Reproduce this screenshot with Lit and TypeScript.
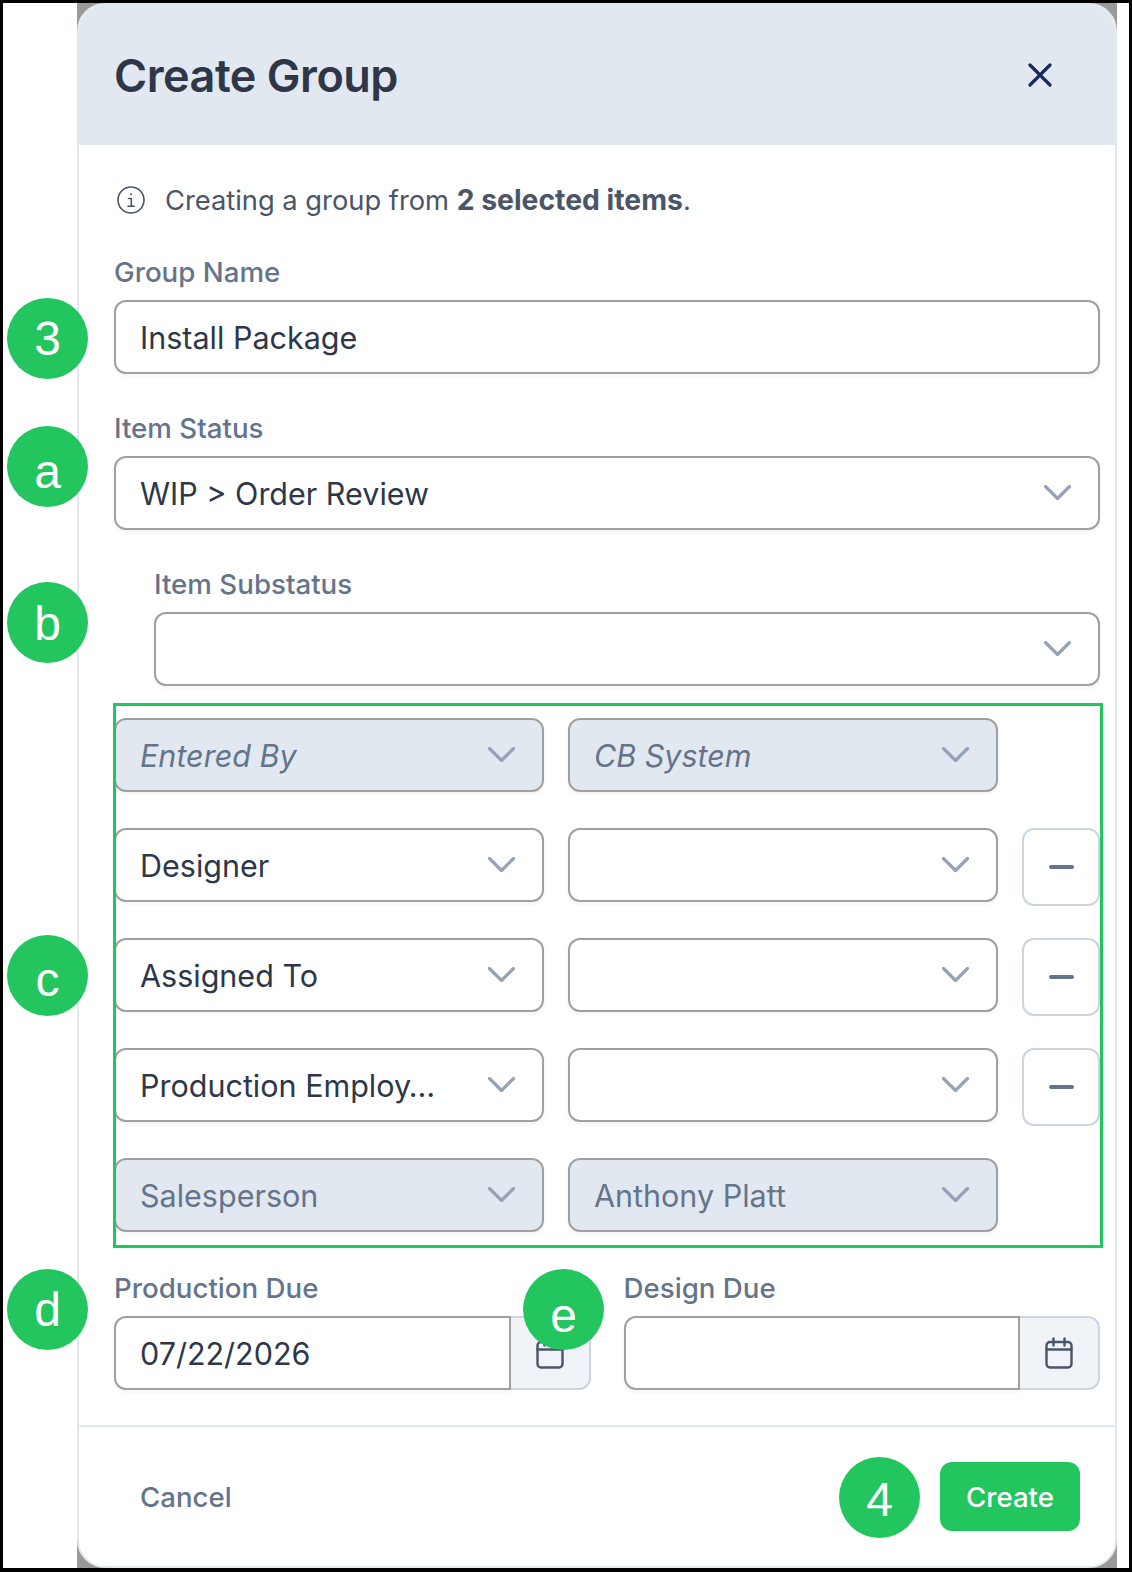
import { LitElement, html, css } from "lit";
import { customElement } from "lit/decorators.js";

const chevron = html`<svg class="chev" viewBox="0 0 27 15" fill="none"><path d="M1.5 1.5 13.5 13.5 25.5 1.5" stroke="currentColor" stroke-width="3.2" stroke-linecap="round" stroke-linejoin="round"/></svg>`;
const calendar = html`<svg class="cal" viewBox="0 0 28 32" fill="none" stroke="currentColor" stroke-width="2.4" stroke-linecap="round" stroke-linejoin="round"><rect x="1.5" y="5" width="25" height="25.5" rx="3.5"/><path d="M8.5 1.5v7M19.5 1.5v7M1.5 12.5h25"/></svg>`;
const callouts = [
  { t: "3", x: 47.5, y: 338, dy: 0 },
  { t: "a", x: 47.5, y: 466.5, dy: 5 },
  { t: "b", x: 47.5, y: 622, dy: 1 },
  { t: "c", x: 47.5, y: 975.5, dy: 4 },
  { t: "d", x: 47.5, y: 1309.5, dy: 0 },
  { t: "e", x: 563.5, y: 1309.5, dy: 6 },
  { t: "4", x: 879.5, y: 1497, dy: 2 },
];
const rows = [
  { a: "Entered By", b: "CB System", state: "ghost", rm: false },
  { a: "Designer", b: "", state: "", rm: true },
  { a: "Assigned To", b: "", state: "", rm: true },
  { a: "Production Employ…", b: "", state: "", rm: true },
  { a: "Salesperson", b: "Anthony Platt", state: "off", rm: false },
];

@customElement("app-root")
export class AppRoot extends LitElement {
  static styles = css`
    :host { display: block; position: relative; box-sizing: border-box; width: 1132px; height: 1572px; background: #fff; border: solid #000; border-width: 3px 3px 4px 3px; padding: 0 12px 0 74px; font-family: Inter, "Liberation Sans", sans-serif; color: #2d3748; overflow: hidden; }
    * { box-sizing: border-box; }
    .backdrop { height: 100%; background: #999; }
    .modal { height: 100%; background: #fff; border: 2px solid #e2e8f0; border-radius: 28px; display: flex; flex-direction: column; overflow: hidden; }
    .head { flex: none; height: 140px; background: #e2e8f0; display: flex; align-items: center; justify-content: space-between; padding: 0 63px 0 35px; }
    .head h1 { margin: 2px 0 0; font-size: 45px; line-height: 60px; font-weight: 600; color: #2d3748; letter-spacing: -0.5px; }
    .x { width: 24px; height: 24px; color: #1a2a5e; display: block; }
    .body { flex: 1; display: flex; flex-direction: column; padding: 35px 15px 35px 35px; }
    .info { display: flex; align-items: center; height: 40px; gap: 20px; margin-left: 3px; margin-bottom: 32px; font-size: 27.3px; color: #4a5568; }
    .info svg { width: 28px; height: 28px; flex: none; }
    .info b { font-weight: 700; font-size: 28.3px; }
    .field { margin-bottom: 34px; }
    .field.sub { margin-left: 40px; margin-bottom: 32px; }
    label { display: block; height: 40px; line-height: 40px; margin-bottom: 8px; font-size: 27.7px; font-weight: 500; color: #64748b; }
    .ctl { height: 74px; border: 2px solid #a0a0a0; border-radius: 12px; background: #fff; display: flex; align-items: center; justify-content: space-between; padding: 0 27px 0 24px; font-size: 30.5px; color: #2d3748; box-shadow: 0 2px 4px rgba(0,0,0,.05); white-space: nowrap; }
    .ctl span { margin-top: 1px; }
    .ctl.ghost, .ctl.off { background: #e2e8f0; color: #64748b; }
    .ctl.ghost { font-style: italic; }
    .chev { width: 27px; height: 15px; color: #94a3b8; flex: none; margin-top: -2px; }
    .group { position: relative; margin-bottom: 33px; display: grid; grid-template-columns: 429.5px 429.5px 78px; grid-auto-rows: 77px; column-gap: 24.5px; row-gap: 33px; align-items: start; }
    .group::after { content: ""; position: absolute; inset: -15px -3px -13px -1px; border: 3px solid #22c55e; pointer-events: none; }
    .rm { height: 78px; border: 2px solid #cbd5e0; border-radius: 12px; background: #fff; display: flex; align-items: center; justify-content: center; }
    .rm i { display: block; width: 25px; height: 4px; border-radius: 2px; background: #64748b; }
    .dates { display: grid; grid-template-columns: 477px 476.5px; column-gap: 32.5px; }
    .dinput { display: flex; height: 74px; }
    .dinput .ctl { flex: 1; border-radius: 12px 0 0 12px; }
    .addon { width: 80px; flex: none; background: #f0f4f9; border: 2px solid #cbd5e0; border-left: none; border-radius: 0 12px 12px 0; display: flex; align-items: center; justify-content: center; color: #4a5568; }
    .cal { width: 28px; height: 32px; }
    .foot { flex: none; height: 141px; border-top: 2px solid #e2e8f0; display: flex; align-items: center; justify-content: space-between; padding: 0 35px 0 61px; }
    .cancel { font-size: 27.6px; font-weight: 500; color: #64748b; }
    .create { width: 140px; height: 69px; border-radius: 12px; background: #22c55e; color: #fff; font-size: 27.6px; font-weight: 500; display: flex; align-items: center; justify-content: center; }
    .dot { position: absolute; width: 81px; height: 81px; margin: -40.5px 0 0 -40.5px; border-radius: 50%; background: #22c55e; color: #fff; font-family: "Liberation Sans", Arial, sans-serif; font-size: 48px; display: flex; align-items: center; justify-content: center; }
  `;

  private ctl(text: string, state = "") {
    return html`<div class="ctl ${state}"><span>${text}</span>${chevron}</div>`;
  }

  render() {
    return html`
      <div class="backdrop">
        <div class="modal">
          <div class="head">
            <h1>Create Group</h1>
            <svg class="x" viewBox="0 0 24 24" fill="none"><path d="M2 2 22 22M22 2 2 22" stroke="currentColor" stroke-width="3.2" stroke-linecap="round"/></svg>
          </div>
          <div class="body">
            <div class="info">
              <svg viewBox="0 0 28 28" fill="none" stroke="#4a5568" stroke-width="1.6" stroke-linecap="round" stroke-linejoin="round"><circle cx="14" cy="14" r="13"/><path d="M11.5 12.5H14.3V20M11 20.2h6.2"/><circle cx="14" cy="8.2" r="1" fill="#4a5568" stroke="none"/></svg>
              <span>Creating a group from <b>2 selected items</b>.</span>
            </div>
            <div class="field"><label>Group Name</label><div class="ctl"><span>Install Package</span></div></div>
            <div class="field"><label>Item Status</label>${this.ctl("WIP > Order Review")}</div>
            <div class="field sub"><label>Item Substatus</label>${this.ctl("")}</div>
            <div class="group">
              ${rows.map(r => html`${this.ctl(r.a, r.state)}${this.ctl(r.b, r.state)}${r.rm ? html`<div class="rm"><i></i></div>` : html`<div></div>`}`)}
            </div>
            <div class="dates">
              <div><label>Production Due</label><div class="dinput"><div class="ctl"><span>07/22/2026</span></div><div class="addon">${calendar}</div></div></div>
              <div><label>Design Due</label><div class="dinput"><div class="ctl"></div><div class="addon">${calendar}</div></div></div>
            </div>
          </div>
          <div class="foot">
            <div class="cancel">Cancel</div>
            <div class="create">Create</div>
          </div>
        </div>
      </div>
      ${callouts.map(c => html`<div class="dot" style="left:${c.x - 3}px;top:${c.y - 3}px;padding-top:${c.dy * 2}px">${c.t}</div>`)}
    `;
  }
}
